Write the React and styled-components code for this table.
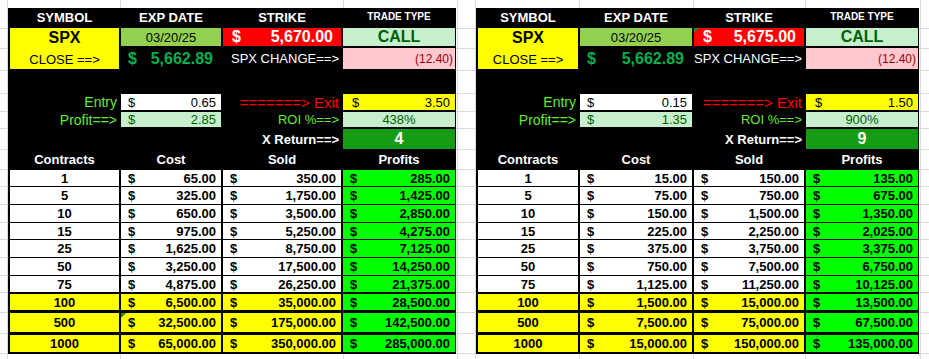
import styled, { createGlobalStyle } from "styled-components"

const gridColor = "#dcdcdc"
const vLines = [7, 120, 343, 457, 475, 579, 693, 805, 920]
const hLines = [28, 48, 70, 93, 111, 128, 149, 169, 186, 204, 222, 239, 257, 275, 292, 312, 333, 353]
const sheetLines = [
  ...vLines.map(x => `linear-gradient(to right, transparent ${x}px, ${gridColor} ${x}px, ${gridColor} ${x + 1}px, transparent ${x + 1}px)`),
  ...hLines.map(y => `linear-gradient(to bottom, transparent ${y}px, ${gridColor} ${y}px, ${gridColor} ${y + 1}px, transparent ${y + 1}px)`),
].join(", ")

const GlobalStyle = createGlobalStyle`
  html, body {
    margin: 0;
    width: 929px;
    height: 359px;
    overflow: hidden;
  }
  body {
    background-color: #fff;
    background-image: ${sheetLines};
    font-family: "Liberation Sans", Arial, sans-serif;
  }
`

const contracts = [1, 5, 10, 15, 25, 50, 75, 100, 500, 1000]
// row heights of the contracts table, last three are the highlighted ones
const rowHeights = [16, 17, 17, 16, 17, 17, 16, 16, 19, 17]
const rowExtra = [0, 0, 0, 0, 0, 0, 0, 1, 2, 2]

const trades = [
  {
    cols: "109px 100px 118px 112px",
    strike: "5,670.00",
    entry: 0.65,
    exit: 3.5,
    roi: "438%",
    xReturn: "4",
    strikeFlag: false,
    costFlagRow: 500,
  },
  {
    cols: "100px 112px 110px 112px",
    strike: "5,675.00",
    entry: 0.15,
    exit: 1.5,
    roi: "900%",
    xReturn: "9",
    strikeFlag: true,
    costFlagRow: null,
  },
]

const money = n => n.toLocaleString("en-US", { minimumFractionDigits: 2, maximumFractionDigits: 2 })

const LABEL_GREEN = "#63eb2f"

export default function App() {
  return (
    <>
      <GlobalStyle />
      <Sheet>
        {trades.map((t, i) => (
          <TradeTable key={i} trade={t} />
        ))}
      </Sheet>
    </>
  )
}

function TradeTable({ trade }) {
  const { cols } = trade
  return (
    <Table>
      <Top $cols={cols}>
        <Head>SYMBOL</Head>
        <Head>EXP DATE</Head>
        <Head>STRIKE</Head>
        <Head $size={10}>TRADE TYPE</Head>

        <SymbolBox>
          <SymbolName>SPX</SymbolName>
          <CloseLabel>CLOSE ==&gt;</CloseLabel>
        </SymbolBox>
        <Cell $bg="#92d050">03/20/25</Cell>
        <Money $bg="#ff0000" $fg="#fff" $bold $size={16} $pl={9} $pr={8} $flag={trade.strikeFlag}>
          <span>$</span><span>{trade.strike}</span>
        </Money>
        <Cell $bg="#c6efce" $fg="#006100" $bold $size={16}>CALL</Cell>

        <Money $fg="#00b050" $bold $size={16} $pl={7} $pr={8}>
          <span>$</span><span>5,662.89</span>
        </Money>
        <Cell $fg="#fff" $align="flex-end" $pr={2}>SPX CHANGE==&gt;</Cell>
        <Cell $bg="#ffc7ce" $fg="#9c0006" $align="flex-end" $pr={2} $size={12}>(12.40)</Cell>

        <Gap $span={4} />

        <Cell $fg={LABEL_GREEN} $align="flex-end" $pr={2} $size={14}>Entry</Cell>
        <Money $bg="#fff">
          <span>$</span><span>{money(trade.entry)}</span>
        </Money>
        <Cell $fg="#ff0000" $align="flex-end" $pr={2} $size={15}>=======&gt;&nbsp;Exit</Cell>
        <Money $bg="#ffff00" $pl={9}>
          <span>$</span><span>{money(trade.exit)}</span>
        </Money>

        <Cell $fg={LABEL_GREEN} $align="flex-end" $pr={2} $size={14}>Profit==&gt;</Cell>
        <Money $bg="#c6efce" $fg="#006100">
          <span>$</span><span>{money(trade.exit - trade.entry)}</span>
        </Money>
        <Cell $fg={LABEL_GREEN} $align="flex-end" $pr={2}>ROI %==&gt;</Cell>
        <Cell $bg="#c6efce" $fg="#006100">{trade.roi}</Cell>

        <Gap $span={2} />
        <Cell $fg="#fff" $bold $align="flex-end" $pr={2}>X Return==&gt;</Cell>
        <Cell $bg="#149c14" $fg="#fff" $bold $size={16}>{trade.xReturn}</Cell>

        <Head>Contracts</Head>
        <Head>Cost</Head>
        <Head>Sold</Head>
        <Head>Profits</Head>
      </Top>

      <Rows>
        {contracts.map((c, i) => {
          const cost = c * trade.entry * 100
          const sold = c * trade.exit * 100
          const big = c >= 100
          const bg = big ? "#ffff00" : "#fff"
          return (
            <DataRow key={c} $cols={cols} $h={rowHeights[i]} $extra={rowExtra[i]}>
              <Cell $bg={bg} $bold>{c}</Cell>
              <Money $bg={bg} $bold $flag={trade.costFlagRow === c}>
                <span>$</span><span>{money(cost)}</span>
              </Money>
              <Money $bg={bg} $bold>
                <span>$</span><span>{money(sold)}</span>
              </Money>
              <Money $bg="#00ff00" $bold>
                <span>$</span><span>{money(sold - cost)}</span>
              </Money>
            </DataRow>
          )
        })}
      </Rows>
    </Table>
  )
}

const Sheet = styled.div`
  display: flex;
  align-items: flex-start;
  gap: 20px;
  padding: 8px 0 0 8px;
`

const Table = styled.div`
  background: #000;
  display: flex;
  flex-direction: column;
  padding: 0 1px 0 2px;
`

const Top = styled.div`
  display: grid;
  grid-template-columns: ${p => p.$cols};
  grid-template-rows: 18px 18px 21px 21px 16px 15px 20px 17px;
  column-gap: 2px;
  row-gap: 2px;
`

const Rows = styled.div`
  display: flex;
  flex-direction: column;
  gap: 1px;
  padding: 2px 0;
`

const DataRow = styled.div`
  display: grid;
  grid-template-columns: ${p => p.$cols};
  column-gap: 2px;
  height: ${p => p.$h}px;
  margin-top: ${p => p.$extra}px;
`

const Cell = styled.div`
  position: relative;
  display: flex;
  align-items: center;
  justify-content: ${p => p.$align || "center"};
  padding-right: ${p => p.$pr || 0}px;
  background: ${p => p.$bg || "transparent"};
  color: ${p => p.$fg || "#000"};
  font-size: ${p => p.$size || 13}px;
  font-weight: ${p => (p.$bold ? 700 : 400)};
  line-height: 1;
  white-space: nowrap;
`

const Head = styled.div`
  display: flex;
  align-items: center;
  justify-content: center;
  color: #fff;
  font-size: ${p => p.$size || 13}px;
  font-weight: 700;
  line-height: 1;
  white-space: nowrap;
`

const Money = styled.div`
  position: relative;
  display: flex;
  align-items: center;
  justify-content: space-between;
  padding: 0 ${p => p.$pr ?? 5}px 0 ${p => p.$pl ?? 7}px;
  background: ${p => p.$bg || "transparent"};
  color: ${p => p.$fg || "#000"};
  font-size: ${p => p.$size || 13}px;
  font-weight: ${p => (p.$bold ? 700 : 400)};
  line-height: 1;
  white-space: nowrap;

  ${p => p.$flag && `
    &::before {
      content: "";
      position: absolute;
      top: 0;
      left: 0;
      border-top: 5px solid #1f8a1f;
      border-right: 5px solid transparent;
    }
  `}
`

const Gap = styled.div`
  grid-column: span ${p => p.$span};
`

const SymbolBox = styled.div`
  grid-row: span 2;
  background: #ffff00;
  display: grid;
  grid-template-rows: 20px 1fr;
  justify-items: center;
  align-items: center;
  color: #000;
  line-height: 1;
`

const SymbolName = styled.span`
  font-size: 16px;
  font-weight: 700;
`

const CloseLabel = styled.span`
  font-size: 13px;
  padding-top: 2px;
`
